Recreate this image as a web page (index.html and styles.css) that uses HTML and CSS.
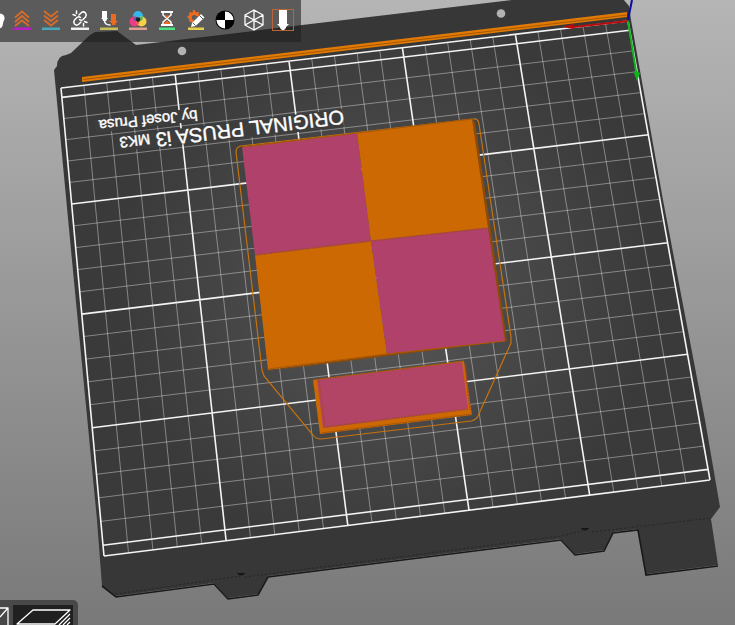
FILE: index.html
```
<!DOCTYPE html>
<html lang="en">
<head>
<meta charset="utf-8">
<title>Print preview</title>
<link rel="stylesheet" href="styles.css">
</head>
<body>
<main class="preview">
  <svg class="scene" viewBox="0 0 735 625" preserveAspectRatio="xMinYMin slice" role="img" aria-label="Sliced model on the print bed">
    <defs>
      <radialGradient id="sheen" gradientUnits="userSpaceOnUse" cx="385" cy="290" r="270">
        <stop offset="0" stop-color="#5a5a5a"/>
        <stop offset=".5" stop-color="#484848"/>
        <stop offset="1" stop-color="#3a3a3a"/>
      </radialGradient>
      <pattern id="weave" width="3" height="3" patternUnits="userSpaceOnUse" patternTransform="rotate(28)">
        <path class="weave" d="M0 1H3"/>
      </pattern>
    </defs>
    <path class="bed" d="M54 70L57 66Q57 56 66 55L71 53L90 35L95 32L117 31L136 45L520 -1H623L629 6L631 20L663 200L705 420L720 507L711 519L718 565L646 574L638 529L613 532L604 550L575 554L561 539L268 576L258 594L228 598L214 583L116 596L102 586L97 520L71 250Z"/>
    <path class="bed-side" d="M102 586L116 597L214 584L228 599L258 595L268 577L561 540L575 555L604 551L613 533L638 530L646 575L718 566"/>
    <path class="bed-top" d="M61 88L628 21L710 480L104 556Z"/>
    <circle class="hole" cx="182" cy="51" r="4.3"/>
    <circle class="hole" cx="501" cy="13.500" r="4.3"/>
    <path class="seam" d="M116 594L240 576M245 577L561 536L583 531M592 532L711 518"/>
    <path class="notch" d="M237 573Q241 577 245 573M581 528Q585 532 589 528"/>
    <g id="grid"></g>
    <path class="text-band" d="M94 120L196 108L198 121L96 133ZM118 136L342 109L344 127L120 151Z"/>
    <g class="engraving">
      <text class="engraving-large" transform="translate(343 110) rotate(173)">ORIGINAL PRUSA i3 <tspan class="engraving-small">MK3</tspan></text>
      <text class="engraving-small" transform="translate(197 110) rotate(174)">by Josef Prusa</text>
    </g>
    <path class="purge" d="M82 77L627 12V17L82 82Z"/>
    <path class="purge-line" d="M83 79.500L627 15"/>
    <path class="skirt" d="M236 152Q236 147 241 146L473 119Q478 118 479 124L511 337V343L478 416Q476 420 471 421L321 439Q316 439 313 435L264 376L262 370Z"/>
    <path class="model-side" d="M472 119L475 122L507 341L268 371L387 352L500 340Z"/>
    <path class="pink" d="M242 147L357 133L371 241L255 255Z"/>
    <path class="orange" d="M357 133L472 119L488 228L371 241Z"/>
    <path class="orange" d="M255 255L371 241L387 354L268 370Z"/>
    <path class="pink" d="M371 241L488 228L505 341L387 354Z"/>
    <path class="stitch" d="M255 255L371 241L488 228"/>
    <path class="edge" d="M242 147L357 133L472 119M268 369L387 354L505 341"/>
    <path class="orange" d="M313 380L464 361L472 415L320 434Z"/>
    <path class="pink" d="M317 379L462 362L468 409L323 428Z"/>
    <path class="weave-fill" d="M317 379L462 362L468 409L323 428Z"/>
    <path class="edge" d="M313 380L464 361M321 433L472 414"/>
    <path class="stitch" d="M319 381L325 427L468 409M465 364L470 410"/>
    <path class="axis-x" d="M628 20L573 26V24L562 27L574 29V28L628 22Z"/>
    <path class="axis-y" d="M627 21H629L637 71L640 73L637 81L634 73L635 71Z"/>
    <path class="axis-z" d="M628 20L632 0"/>
  </svg>

  <nav class="toolbar" aria-label="Show in preview">
    <button type="button" class="tool tool-cut" aria-label="Travel"><svg viewBox="0 0 22 22"><path class="w" d="M9 6Q14 3 20 5Q23 6 22.500 10Q21 13 20.500 17Q19 20 17 19Q12 14 9 12Z"/></svg></button>
    <button type="button" class="tool" aria-label="Retractions"><svg viewBox="0 0 22 22"><path class="chev" d="M4 8.500L11 2.500L18 8.500M4 13L11 7L18 13M4 17L11 11.500L18 17"/><path fill="#b81fc4" d="M2 18.500H20V21H2Z"/></svg></button>
    <button type="button" class="tool" aria-label="Deretractions"><svg viewBox="0 0 22 22"><path class="chev" d="M4 2L11 7.500L18 2M4 6.500L11 12L18 6.500M4 11L11 16.500L18 11"/><path fill="#48a9bd" d="M2 18.500H20V21H2Z"/></svg></button>
    <button type="button" class="tool" aria-label="Seams"><svg viewBox="0 0 22 22"><path class="wl" d="M10 6L12.500 3.500Q14.500 2 16.500 4Q18 6 16.500 8L14 10.500Q12 12 10.500 10.500M12 13L9.500 15.500Q7.500 17 5.500 15Q4 13 5.500 11L8 8.500Q10 7 11.500 8.500M7.500 2V4.500M4 5.500L6.500 6.500M14.500 17V14.500M18 13.500L15.500 12.500"/><path fill="#eee" d="M2 18.500H20V21H2Z"/></svg></button>
    <button type="button" class="tool" aria-label="Tool changes"><svg viewBox="0 0 22 22"><path class="w" d="M4 2H9V9H10L8.500 11V12H5V11L3 9H4Z"/><path class="o" d="M13 5H18V12H20L17.500 14.500V16H14V14.500L11 12H13Z"/><path class="wl" d="M6.500 12Q7 16 12 16"/><path fill="#c9bd57" d="M2 18.500H20V21H2Z"/></svg></button>
    <button type="button" class="tool" aria-label="Color changes"><svg viewBox="0 0 22 22"><circle cx="11" cy="7" r="5" fill="#35b5e8"/><circle cx="7.500" cy="12.500" r="5" fill="#ef3c86"/><circle cx="14.500" cy="12.500" r="5" fill="#f7d04a"/><path fill="#e55b30" d="M11 9Q14 12 11 16Q8 12 11 9"/><path fill="#7855b5" d="M6 8Q9 7 11 9L9 12Q6 12 6 8"/><path fill="#62b456" d="M16 8Q13 7 11 9L13 12Q16 12 16 8"/><circle cx="11" cy="10.500" r="2.300" fill="#172128"/><path fill="#dfa093" d="M2 18.500H20V21H2Z"/></svg></button>
    <button type="button" class="tool" aria-label="Pause prints"><svg viewBox="0 0 22 22"><path class="w" d="M5 2H17V4H5ZM5 15H17V17H5Z"/><path class="wl" d="M7 4V6L11 9.500L15 6V4M7 15V13L11 9.500L15 13V15"/><path class="o" d="M8.500 6.500H13.500L11 9ZM8 14L11 11.500L14 14V15H8Z"/><path fill="#4ee184" d="M3 18.500H19V21H3Z"/></svg></button>
    <button type="button" class="tool" aria-label="Custom G-codes"><svg viewBox="0 0 22 22"><path class="gear" d="M9 12.500A4 4 0 1 1 13 7"/><path class="teeth" d="M9 1V4M4.500 3.500L6 5M2.500 8H5M4.500 12.500L6 11M13.500 3.500L12 5"/><path class="w" d="M6 18L7 14L16 5L19.500 8.500L10.500 17Z"/><path class="slit" d="M8 14L10.500 16.500M14.500 6.500L18 10"/><path fill="#e7cf4b" d="M3 18.500H19V21H3Z"/></svg></button>
    <button type="button" class="tool" aria-label="Center of gravity"><svg viewBox="0 0 22 22"><circle cx="11" cy="11" r="9.500" fill="#000"/><path class="w" d="M11 11V2.500A8.500 8.500 0 0 1 19.500 11ZM11 11V19.500A8.500 8.500 0 0 1 2.500 11Z"/></svg></button>
    <button type="button" class="tool" aria-label="Shells"><svg viewBox="0 0 22 22"><path class="cube" d="M11 1L20 6V16L11 21L2 16V6ZM2 6L11 11L20 6M11 11V21M11 1V11M2 16L11 11L20 16"/></svg></button>
    <button type="button" class="tool tool-active" aria-label="Tool marker" aria-pressed="true"><svg viewBox="0 0 22 22"><path class="w" d="M7 1H15V15H17L14 18V19L12 21H10L8 19V18L5 15H7Z"/></svg></button>
  </nav>

  <nav class="views" aria-label="View mode">
    <button type="button" class="view view-cut" aria-label="3D editor"><svg viewBox="0 0 10 20"><path class="cube" d="M0 3H8V20M8 3L0 12"/></svg></button>
    <button type="button" class="view view-active" aria-label="Preview" aria-pressed="true"><svg viewBox="0 0 60 20"><path class="cube" d="M20 5H57L42 19H4ZM57 9L46 20M57 13L50 20M57 17L54 20"/></svg></button>
  </nav>
</main>
<script src="grid.js"></script>
</body>
</html>
```
FILE: styles.css
```
* {
  box-sizing: border-box;
}

body {
  margin: 0;
  font-family: "Liberation Sans", Arial, sans-serif;
}

.preview {
  position: relative;
  height: 100vh;
  overflow: hidden;
  background: linear-gradient(#b5b5b5, #797979);
}

.scene {
  display: block;
  width: 100%;
  height: 100%;
}

.bed { fill: #373737; }
.bed-side { fill: none; stroke: #191919; stroke-width: 1.6; }
.bed-top { fill: url(#sheen); }
.hole { fill: #b2b2b2; }
.seam { fill: none; stroke: #262626; stroke-width: 1; stroke-dasharray: 2 2; }
.notch { fill: #161616; stroke: #161616; }

.grid-minor { fill: none; stroke: #fff; stroke-opacity: .38; stroke-width: 1; }
.grid-major { fill: none; stroke: #f4f4f4; stroke-width: 1.6; }
.text-band { fill: #3d3d3d; }
.engraving { fill: #fff; stroke: #fff; stroke-width: .4; }
.engraving-large { font-size: 20px; }
.engraving-small { font-size: 15px; }

.purge { fill: #e07a05; }
.purge-line { stroke: #a85800; stroke-width: 1; }
.skirt { fill: none; stroke: #c8720d; stroke-width: 1.2; }
.model-side { fill: #8c4b08; }
.pink { fill: #b0416b; }
.orange { fill: #cd6903; }
.edge { fill: none; stroke: #a85806; stroke-width: 1.2; }
.stitch { fill: none; stroke: #a44838; stroke-width: 1.5; stroke-dasharray: 2 1; }
.weave { stroke: #bd5943; stroke-width: 1; }
.weave-fill { fill: url(#weave); opacity: .4; }

.axis-x { fill: #b80a0a; }
.axis-y { fill: #0db51b; }
.axis-z { stroke: #0b0b9c; stroke-width: 2; }

.toolbar {
  position: absolute;
  top: 0;
  left: 0;
  display: flex;
  gap: 7px;
  padding: 9px 7px 11px 0;
  background: rgba(32, 32, 32, .6);
}

.tool {
  width: 22px;
  height: 22px;
  padding: 0;
  border: 0;
  background: none;
}

.tool-cut { margin-left: -18px; }

.tool-active {
  outline: 1px solid #b8653c;
  outline-offset: -1px;
}

.tool svg,
.view svg {
  display: block;
  width: 100%;
  height: 100%;
  overflow: visible;
}

.w { fill: #fff; }
.o { fill: #ed6b21; }
.wl { fill: none; stroke: #fff; stroke-width: 1.5; stroke-linecap: round; }
.chev { fill: none; stroke: #d86b2a; stroke-width: 1.8; }
.gear { fill: none; stroke: #ed6b21; stroke-width: 3; }
.teeth { fill: none; stroke: #ed6b21; stroke-width: 2.4; }
.slit { stroke: #555; stroke-width: 1; }
.cube { fill: none; stroke: #fff; stroke-width: 1.3; stroke-linejoin: round; }

.views {
  position: absolute;
  bottom: 0;
  left: 0;
  display: flex;
  gap: 3px;
  padding: 5px 5px 0 0;
  border-radius: 0 5px 0 0;
  background: #484848;
}

.view {
  height: 20px;
  padding: 0;
  border: 0;
  background: #484848;
}

.view-cut { width: 10px; }

.view-active {
  width: 60px;
  background: #202020;
}
```
FILE: grid.js
```
// Perspective projection of the bed plane (250 mm wide) onto the scene.
const corners = [[61, 88], [628, 21], [710, 480], [104, 556]];
const bedWidth = 250;
const bedDepth = 209;

function projector([[x0, y0], [x1, y1], [x2, y2], [x3, y3]]) {
  const dx1 = x1 - x2, dx2 = x3 - x2, sx = x0 - x1 + x2 - x3;
  const dy1 = y1 - y2, dy2 = y3 - y2, sy = y0 - y1 + y2 - y3;
  const det = dx1 * dy2 - dx2 * dy1;
  const g = (sx * dy2 - dx2 * sy) / det;
  const h = (dx1 * sy - sx * dy1) / det;
  return (mx, my) => {
    const u = mx / bedWidth, v = my / bedDepth;
    const w = g * u + h * v + 1;
    const x = ((x1 - x0 + g * x1) * u + (x3 - x0 + h * x3) * v + x0) / w;
    const y = ((y1 - y0 + g * y1) * u + (y3 - y0 + h * y3) * v + y0) / w;
    return x.toFixed(1) + " " + y.toFixed(1);
  };
}

const project = projector(corners);
const segment = (a, b, c, d) => "M" + project(a, b) + "L" + project(c, d);
let minor = "";
let major = "";

for (let i = 0; i <= 25; i++) {
  const line = segment(i * 10, 0, i * 10, bedDepth);
  if (i % 5) minor += line; else major += line;
}
for (let i = 0; i <= 20; i++) {
  const line = segment(0, 4.5 + i * 10, bedWidth, 4.5 + i * 10);
  if (i % 5) minor += line; else major += line;
}
major += segment(0, 0, bedWidth, 0) + segment(0, bedDepth, bedWidth, bedDepth);

document.getElementById("grid").innerHTML =
  `<path class="grid-minor" d="${minor}"/><path class="grid-major" d="${major}"/>`;
```
